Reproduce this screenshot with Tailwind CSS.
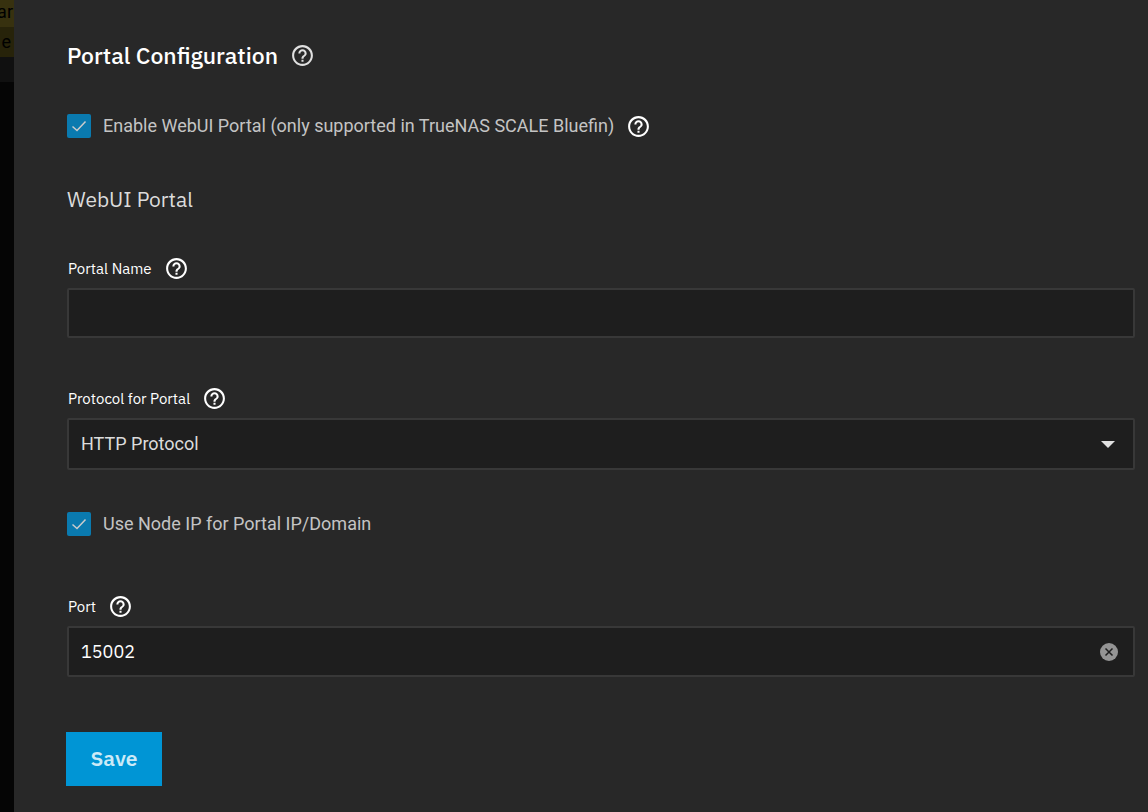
<!DOCTYPE html>
<html lang="en">

<head>
    <meta charset="UTF-8">
    <meta name="viewport" content="width=device-width, initial-scale=1.0">
    <title>Portal Configuration</title>
    <script src="https://cdn.jsdelivr.net/npm/@tailwindcss/browser@4"></script>
</head>

<body class="flex min-h-screen bg-[#282828] text-white font-['IBM_Plex_Sans','Noto_Sans',sans-serif]">

    <!-- Icons -->
    <svg class="hidden" aria-hidden="true">
        <symbol id="help" viewBox="0 0 24 24">
            <path fill="currentColor"
                d="M11 18h2v-2h-2v2zm1-16C6.48 2 2 6.48 2 12s4.48 10 10 10 10-4.48 10-10S17.52 2 12 2zm0 18c-4.41 0-8-3.59-8-8s3.59-8 8-8 8 3.59 8 8-3.59 8-8 8zm0-14c-2.21 0-4 1.79-4 4h2c0-1.1.9-2 2-2s2 .9 2 2c0 2-3 1.75-3 5h2c0-2.25 3-2.5 3-5 0-2.21-1.79-4-4-4z" />
        </symbol>
        <symbol id="check" viewBox="0 0 24 24">
            <path fill="none" stroke="currentColor" stroke-width="1.5" d="M5.5 12.5l4.5 4L18.5 7.5" />
        </symbol>
    </svg>

    <!-- Page behind the panel -->
    <aside class="w-[14px] shrink-0 overflow-hidden bg-[#050505] font-['Roboto',sans-serif] text-lg text-black">
        <p class="flex h-[27px] items-start justify-end bg-[#37310f] pr-px leading-6">ar</p>
        <p class="flex h-[30px] items-center justify-end bg-[#27230a] pr-[3px] leading-6">e</p>
        <div class="h-[25px] bg-[#101010]"></div>
    </aside>

    <main class="min-w-0 flex-1 pt-10 pr-[13px] pb-6 pl-[53px]">
        <form>
            <div class="flex h-[30px] items-center gap-3">
                <h1 class="text-[23px] leading-[30px] font-medium">Portal Configuration</h1>
                <button type="button" aria-label="Help" class="text-[#e0e0e0]"><svg class="size-[25px]"><use href="#help" /></svg></button>
            </div>

            <div class="mt-11 flex h-6 items-center gap-3">
                <label class="flex items-center gap-3 font-['Roboto',sans-serif] text-lg leading-6 text-[#c4c4c4]">
                    <span class="relative flex size-6">
                        <input type="checkbox" checked class="size-6 appearance-none rounded-xs bg-[#0a7aaf]">
                        <svg class="pointer-events-none absolute inset-0 size-6 text-[#cccccc]"><use href="#check" /></svg>
                    </span>
                    Enable WebUI Portal (only supported in TrueNAS SCALE Bluefin)
                </label>
                <button type="button" aria-label="Help"><svg class="size-[25px]"><use href="#help" /></svg></button>
            </div>

            <h2 class="mt-[46px] text-[21px] leading-[30px] text-[#dcdcdc]">WebUI Portal</h2>

            <div class="mt-[42px] flex h-6 items-center gap-3 pl-px">
                <label for="portalName" class="pt-0.5 text-[15px] leading-6">Portal Name</label>
                <button type="button" aria-label="Help"><svg class="size-[25px]"><use href="#help" /></svg></button>
            </div>
            <input id="portalName" type="text"
                class="mt-2 block h-[50px] w-full rounded-xs border-2 border-[#383838] bg-[#1e1e1e] px-3 text-lg">

            <div class="mt-12 flex h-6 items-center gap-3 pl-px">
                <label for="protocol" class="pt-0.5 text-[15px] leading-6">Protocol for Portal</label>
                <button type="button" aria-label="Help"><svg class="size-[25px]"><use href="#help" /></svg></button>
            </div>
            <div class="relative mt-2">
                <select id="protocol"
                    class="block h-[52px] w-full appearance-none rounded-xs border-2 border-[#383838] bg-[#1e1e1e] px-3 font-['Roboto',sans-serif] text-lg text-[#dcdcdc]">
                    <option>HTTP Protocol</option>
                </select>
                <svg class="pointer-events-none absolute top-[23px] right-5 h-[7px] w-[14px] text-[#e0e0e0]" viewBox="0 0 14 7">
                    <path fill="currentColor" d="M0 0h14L7 7z" />
                </svg>
            </div>

            <div class="mt-[42px] flex h-6 items-center">
                <label class="flex items-center gap-3 font-['Roboto',sans-serif] text-lg leading-6 text-[#c4c4c4]">
                    <span class="relative flex size-6">
                        <input type="checkbox" checked class="size-6 appearance-none rounded-xs bg-[#0a7aaf]">
                        <svg class="pointer-events-none absolute inset-0 size-6 text-[#cccccc]"><use href="#check" /></svg>
                    </span>
                    Use Node IP for Portal IP/Domain
                </label>
            </div>

            <div class="mt-[58px] flex h-6 items-center gap-3 pl-px">
                <label for="port" class="pt-0.5 text-[15px] leading-6">Port</label>
                <button type="button" aria-label="Help"><svg class="size-[25px]"><use href="#help" /></svg></button>
            </div>
            <div class="relative mt-2">
                <input id="port" type="text" value="15002"
                    class="block h-[51px] w-full rounded-xs border-2 border-[#383838] bg-[#1e1e1e] px-3 text-lg">
                <button type="button" aria-label="Clear" class="absolute top-4 right-4 text-[#949494]">
                    <svg class="block size-5" viewBox="0 0 20 20">
                        <circle cx="10" cy="10" r="9" fill="currentColor" />
                        <path stroke="#1e1e1e" stroke-width="1.5" d="M6.5 6.5l7 7M13.5 6.5l-7 7" />
                    </svg>
                </button>
            </div>

            <button type="submit"
                class="mt-[55px] -ml-px block h-[54px] w-24 bg-[#0095d5] text-[21px] font-semibold text-[#cceaf7]">Save</button>
        </form>
    </main>

</body>

</html>
